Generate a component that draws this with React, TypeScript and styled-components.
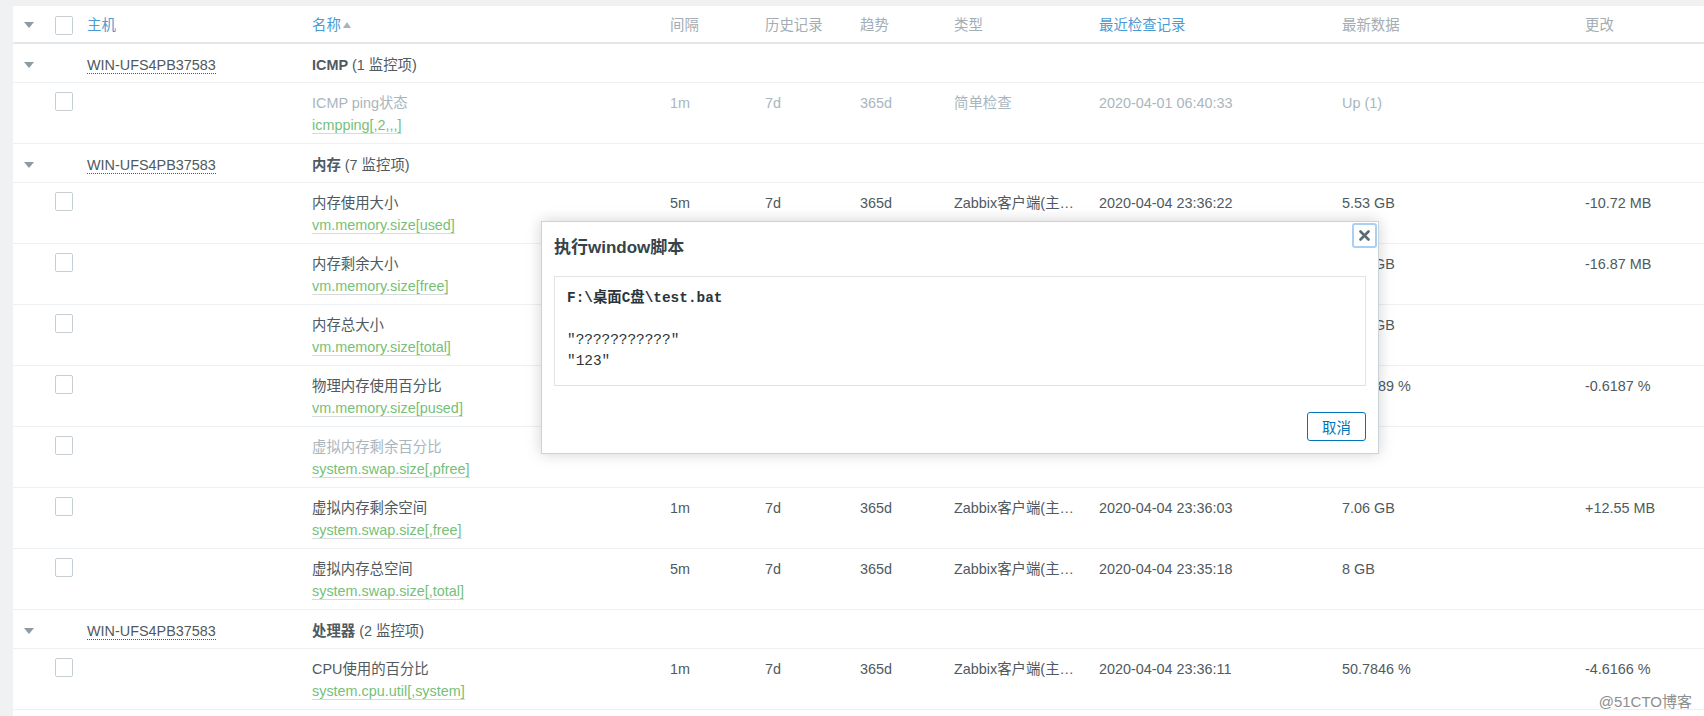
import React from 'react';
import styled, { createGlobalStyle } from 'styled-components';

const GlobalStyle = createGlobalStyle`
  html, body {
    margin: 0;
    padding: 0;
  }
  body {
    background: #eff1f3;
    font-family: 'Liberation Sans', Arial, 'Noto Sans CJK SC', sans-serif;
    font-size: 14.4px;
    color: #4f5a60;
  }
`;

const COLS = '34px 32px 225px 358px 95px 95px 94px 145px 243px 243px 1fr';

const Page = styled.div`
  position: relative;
  height: 716px;
  overflow: hidden;
  padding: 6px 0 0 13px;
  box-sizing: border-box;
`;

const Table = styled.div`
  background: #ffffff;
  min-height: 720px;
`;

const ROW = {
  head: { h: 38, pad: 2, border: '2px solid #e3e7ea' },
  group: { h: 39, pad: 4, border: '1px solid #edf0f2' },
  item: { h: 61, pad: 9, border: '1px solid #edf0f2' },
};

const Row = styled.div<{ $kind: 'head' | 'group' | 'item' }>`
  display: grid;
  grid-template-columns: ${COLS};
  box-sizing: border-box;
  height: ${(p) => ROW[p.$kind].h}px;
  padding-top: ${(p) => ROW[p.$kind].pad}px;
  align-items: ${(p) => (p.$kind === 'item' ? 'start' : 'center')};
  border-bottom: ${(p) => ROW[p.$kind].border};
`;

const Cell = styled.div<{ $muted?: boolean; $first?: boolean; $clip?: boolean }>`
  padding-left: ${(p) => (p.$first ? 11 : 8)}px;
  padding-right: ${(p) => (p.$clip ? 12 : 0)}px;
  line-height: 22px;
  white-space: nowrap;
  overflow: hidden;
  text-overflow: ellipsis;
  color: ${(p) => (p.$muted ? '#aab6bd' : '#4f5a60')};
`;

const HeadCell = styled(Cell)<{ $link?: boolean }>`
  color: ${(p) => (p.$link ? '#4b9bd3' : '#a3adb3')};
`;

const SortUp = styled.span`
  display: inline-block;
  margin-left: 2px;
  vertical-align: 2px;
  width: 0;
  height: 0;
  border-left: 4.5px solid transparent;
  border-right: 4.5px solid transparent;
  border-bottom: 6px solid #a9b4ba;
`;

const Arrow = styled.span`
  display: block;
  width: 0;
  height: 0;
  border-left: 5px solid transparent;
  border-right: 5px solid transparent;
  border-top: 6px solid #8d9ba3;
`;

const Check = styled.span`
  display: block;
  width: 18px;
  height: 19px;
  box-sizing: border-box;
  border: 1px solid #c5ced3;
  border-radius: 2px;
  background: #fff;
`;

const Host = styled.span`
  border-bottom: 1px dotted #4f5a60;
`;

const GroupName = styled.b`
  font-weight: bold;
`;

const Key = styled.span`
  color: #76bf78;
  border-bottom: 1px solid #d4dadd;
`;

/* modal */
const Modal = styled.div`
  position: absolute;
  z-index: 10;
  left: 541px;
  top: 221px;
  width: 838px;
  box-sizing: border-box;
  display: flex;
  flex-direction: column;
  padding: 16px 12px 12px 12px;
  background: #fff;
  border: 1px solid #cbd3d8;
  box-shadow: 0 0 14px rgba(0, 0, 0, 0.18);
`;

const Title = styled.h4`
  margin: 0 0 18px 0;
  font-size: 17px;
  line-height: 20px;
  font-weight: bold;
  color: #35434b;
`;

const Close = styled.button`
  position: absolute;
  top: 1px;
  right: 1px;
  width: 25px;
  height: 25px;
  padding: 0;
  display: flex;
  align-items: center;
  justify-content: center;
  background: #fff;
  border: 2px solid #a9d0f3;
  border-radius: 3px;
`;

const Output = styled.div`
  height: 110px;
  box-sizing: border-box;
  padding: 11px 12px;
  border: 1px solid #dfe4e7;
`;

const Pre = styled.pre`
  margin: 0;
  font-family: 'Liberation Mono', 'Courier New', 'Noto Sans CJK SC', monospace;
  font-size: 14.4px;
  line-height: 21px;
  color: #2b353a;
`;

const Footer = styled.div`
  display: flex;
  justify-content: flex-end;
  margin-top: 26px;
`;

const Button = styled.button`
  width: 59px;
  height: 29px;
  padding: 0;
  background: #fff;
  border: 1px solid #0275b8;
  border-radius: 3px;
  color: #0275b8;
  font-family: 'Liberation Sans', 'Noto Sans CJK SC', sans-serif;
  font-size: 14.4px;
`;

const Watermark = styled.div`
  position: absolute;
  z-index: 11;
  right: 12px;
  bottom: 5px;
  font-size: 15px;
  color: #8e8e8e;
  text-shadow: 0 0 2px #fff, 0 0 2px #fff;
`;

type Group = { kind: 'group'; name: string; count: number };
type Item = {
  kind: 'item';
  name: string;
  key: string;
  muted?: boolean;
  interval: string;
  type: string;
  last: string;
  value: string;
  change: string;
};

const AGENT = 'Zabbix客户端(主动式)';

const rows: (Group | Item)[] = [
  { kind: 'group', name: 'ICMP', count: 1 },
  { kind: 'item', name: 'ICMP ping状态', key: 'icmpping[,2,,,]', muted: true, interval: '1m', type: '简单检查', last: '2020-04-01 06:40:33', value: 'Up (1)', change: '' },
  { kind: 'group', name: '内存', count: 7 },
  { kind: 'item', name: '内存使用大小', key: 'vm.memory.size[used]', interval: '5m', type: AGENT, last: '2020-04-04 23:36:22', value: '5.53 GB', change: '-10.72 MB' },
  { kind: 'item', name: '内存剩余大小', key: 'vm.memory.size[free]', interval: '5m', type: AGENT, last: '2020-04-04 23:36:22', value: '2.46 GB', change: '-16.87 MB' },
  { kind: 'item', name: '内存总大小', key: 'vm.memory.size[total]', interval: '1h', type: AGENT, last: '2020-04-04 23:02:10', value: '7.99 GB', change: '' },
  { kind: 'item', name: '物理内存使用百分比', key: 'vm.memory.size[pused]', interval: '5m', type: AGENT, last: '2020-04-04 23:36:22', value: '69.2189 %', change: '-0.6187 %' },
  { kind: 'item', name: '虚拟内存剩余百分比', key: 'system.swap.size[,pfree]', muted: true, interval: '1m', type: '', last: '', value: '', change: '' },
  { kind: 'item', name: '虚拟内存剩余空间', key: 'system.swap.size[,free]', interval: '1m', type: AGENT, last: '2020-04-04 23:36:03', value: '7.06 GB', change: '+12.55 MB' },
  { kind: 'item', name: '虚拟内存总空间', key: 'system.swap.size[,total]', interval: '5m', type: AGENT, last: '2020-04-04 23:35:18', value: '8 GB', change: '' },
  { kind: 'group', name: '处理器', count: 2 },
  { kind: 'item', name: 'CPU使用的百分比', key: 'system.cpu.util[,system]', interval: '1m', type: AGENT, last: '2020-04-04 23:36:11', value: '50.7846 %', change: '-4.6166 %' },
  { kind: 'item', name: 'CPU队列长度', key: 'system.cpu.load[,avg1]', interval: '1m', type: AGENT, last: '2020-04-04 23:36:11', value: '0.1', change: '' },
];

const CloseIcon = () => (
  <svg width="11" height="11" viewBox="0 0 11 11">
    <path d="M1.5 1.5 L9.5 9.5 M9.5 1.5 L1.5 9.5" stroke="#5b6b74" strokeWidth="2.6" strokeLinecap="round" />
  </svg>
);

export default function App() {
  return (
    <>
      <GlobalStyle />
      <Page>
        <Table>
          <Row $kind="head">
            <Cell $first>
              <Arrow />
            </Cell>
            <Cell>
              <Check />
            </Cell>
            <HeadCell $link>主机</HeadCell>
            <HeadCell $link>
              名称
              <SortUp />
            </HeadCell>
            <HeadCell>间隔</HeadCell>
            <HeadCell>历史记录</HeadCell>
            <HeadCell>趋势</HeadCell>
            <HeadCell>类型</HeadCell>
            <HeadCell $link>最近检查记录</HeadCell>
            <HeadCell>最新数据</HeadCell>
            <HeadCell>更改</HeadCell>
          </Row>
          {rows.map((r, i) =>
            r.kind === 'group' ? (
              <Row $kind="group" key={i}>
                <Cell $first>
                  <Arrow />
                </Cell>
                <Cell />
                <Cell>
                  <Host>WIN-UFS4PB37583</Host>
                </Cell>
                <Cell>
                  <GroupName>{r.name}</GroupName> ({r.count} 监控项)
                </Cell>
              </Row>
            ) : (
              <Row $kind="item" key={i}>
                <Cell $first />
                <Cell>
                  <Check />
                </Cell>
                <Cell />
                <Cell $muted={r.muted}>
                  {r.name}
                  <br />
                  <Key>{r.key}</Key>
                </Cell>
                <Cell $muted={r.muted}>{r.interval}</Cell>
                <Cell $muted={r.muted}>7d</Cell>
                <Cell $muted={r.muted}>365d</Cell>
                <Cell $muted={r.muted} $clip>
                  {r.type}
                </Cell>
                <Cell $muted={r.muted}>{r.last}</Cell>
                <Cell $muted={r.muted}>{r.value}</Cell>
                <Cell $muted={r.muted}>{r.change}</Cell>
              </Row>
            )
          )}
        </Table>

        <Modal>
          <Title>执行window脚本</Title>
          <Close>
            <CloseIcon />
          </Close>
          <Output>
            <Pre>
              <b>F:\桌面C盘\test.bat</b>
              {'\n\n"???????????"\n"123"'}
            </Pre>
          </Output>
          <Footer>
            <Button>取消</Button>
          </Footer>
        </Modal>

        <Watermark>@51CTO博客</Watermark>
      </Page>
    </>
  );
}
